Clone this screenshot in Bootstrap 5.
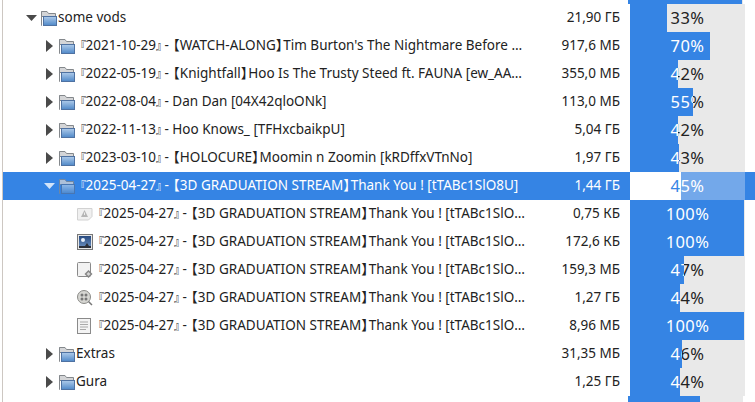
<!DOCTYPE html>
<html lang="en">
<head>
  <meta charset="UTF-8">
  <title>some vods</title>
  <link href="https://cdn.jsdelivr.net/npm/bootstrap@5.3.2/dist/css/bootstrap.min.css" rel="stylesheet">
  <style>
    html, body { height: 402px; overflow: hidden; background: #fff; }
    body {
      font-family: "Noto Sans", "Noto Sans CJK JP", sans-serif;
      font-size: 13.5px;
      color: #222;
    }
    .tree-frame { height: 402px; margin-left: 2px; border-left: 1px solid #cdc7c2; overflow: hidden; }
    .tree-row { height: 28px; }
    .tree-row.is-sel { background: #3584e4; color: #fff; }
    .strip-top { height: 4px; }
    .strip-bottom { height: 6px; }
    .name-cell { width: 524px; }
    .name-text { flex: 1; min-width: 0; overflow: hidden; white-space: nowrap; text-overflow: ellipsis; line-height: 26px; padding-bottom: 2px; }
    .indent-0 { padding-left: 20px; }
    .indent-1 { padding-left: 38px; }
    .indent-2 { padding-left: 74px; }
    .tree-arrow { width: 18px; height: 16px; }
    .tree-icon { width: 16px; height: 16px; margin-right: 1px; }
    .is-sel .tree-icon { opacity: .75; }
    /* the corner and lens brackets come out narrow in the original font */
    .br-corner { font-size: 11px; }
    .br-corner-start { margin-left: -1px; margin-right: -.5px; }
    .br-corner-end { margin-right: -6px; }
    .br-open { margin-left: -6px; }
    .br-close { margin-right: -6px; }
    .size-cell { width: 93px; line-height: 26px; padding-bottom: 2px; }
    .bar-cell { width: 115px; height: 100%; margin-left: 10px; position: relative; background: #e9e9e9; }
    .is-sel .bar-cell { background: #73a8ea; }
    .bar-text { width: 115px; line-height: 28px; text-align: center; font-size: 16.5px; letter-spacing: .4px; display: block; }
    .bar-fill { position: absolute; left: 0; top: 0; height: 100%; overflow: hidden; background: #3584e4; color: #fff; }
    .is-sel .bar-fill { background: #fff; color: #3584e4; }
  </style>
</head>
<body>
  <div class="tree-frame" id="tree"></div>
  <script>
    const folder = `<svg class="tree-icon flex-shrink-0" viewBox="0 0 16 16"><defs><linearGradient id="fg" x1="0" y1="0" x2="0" y2="1"><stop offset="0" stop-color="#afcbea"/><stop offset="1" stop-color="#4f88c8"/></linearGradient></defs><path d="M.5 15.500V1.500h5.500l1.500 2h7v3h-14" fill="#d4d5d7" stroke="#84888c"/><path d="M.5 15.500V1.500" stroke="#84888c"/><rect x="2.500" y="6.500" width="13" height="9" fill="url(#fg)" stroke="#4f72a2"/></svg>`;
    const warnIcon = `<svg class="tree-icon flex-shrink-0" viewBox="0 0 16 16"><path d="M.5 2.500h14.500v8l-3.500 3.500H.5z" fill="#f0f0f0" stroke="#d2d2d2"/><path d="M7.500 4l3.500 7H4z" fill="#b5b5b5"/><path d="M7.500 6.500v2.500" stroke="#eee"/></svg>`;
    const imgIcon = `<svg class="tree-icon flex-shrink-0" viewBox="0 0 16 16"><defs><linearGradient id="ig" x1="0" y1="0" x2="0" y2="1"><stop offset="0" stop-color="#27497f"/><stop offset="1" stop-color="#6f94c4"/></linearGradient></defs><rect x=".5" y=".5" width="15" height="15" fill="#e8e8e8" stroke="#777"/><rect x="2" y="2" width="12" height="12" fill="url(#ig)"/><circle cx="6" cy="6" r="2" fill="#e6eef8"/><path d="M2 14v-2h6l2-3 2 3h2v2z" fill="#2c2f38"/></svg>`;
    const otherIcon = `<svg class="tree-icon flex-shrink-0" viewBox="0 0 16 16"><rect x=".5" y=".5" width="13" height="14" rx="1" fill="#f2f2f2" stroke="#8a8a8a"/><path d="M11.500 8l4 4-4 4-4-4z" fill="#858585"/><path d="M11.500 10l2 2-2 2-2-2z" fill="#d5d5d5"/></svg>`;
    const discIcon = `<svg class="tree-icon flex-shrink-0" viewBox="0 0 16 16"><circle cx="7" cy="7" r="6.500" fill="#d6d6d2" stroke="#8a8a86"/><circle cx="5" cy="5" r="1.500" fill="#777"/><circle cx="9" cy="5" r="1.500" fill="#777"/><circle cx="5" cy="9" r="1.500" fill="#777"/><circle cx="9" cy="9" r="1.500" fill="#777"/><path d="M11.500 11.500l3.500 3.500" stroke="#777" stroke-width="1.500"/></svg>`;
    const textIcon = `<svg class="tree-icon flex-shrink-0" viewBox="0 0 16 16"><rect x=".5" y=".5" width="13" height="15" fill="#f4f4f4" stroke="#8a8a8a"/><path d="M3 4h8M3 6.500h8M3 9h8M3 11.500h6" stroke="#aaa"/></svg>`;
    const arrowRight = `<svg class="tree-arrow flex-shrink-0" viewBox="0 0 18 16"><path d="M5 2l7 6-7 6z" fill="#4a4a4a"/></svg>`;
    const arrowDown = c => `<svg class="tree-arrow flex-shrink-0" viewBox="0 0 18 16"><path d="M3 5h11l-5.500 6z" fill="${c}"/></svg>`;

    // brackets get their own spans so they can be narrowed
    const fmt = s => s
      .replace(/『/g, '<span class="br-corner br-corner-start">『</span>')
      .replace(/』/g, '<span class="br-corner br-corner-end">』</span>')
      .replace(/【/g, '<span class="br-open">【</span>')
      .replace(/】/g, '<span class="br-close">】</span>');

    const grad = "『2025-04-27』 - 【3D GRADUATION STREAM】Thank You ! [tTABc1SlO8U]";
    const rows = [
      [0, "some vods", "21,90 ГБ", 33, folder, "d"],
      [1, "『2021-10-29』 - 【WATCH-ALONG】Tim Burton's The Nightmare Before Christmas", "917,6 МБ", 70, folder, "r"],
      [1, "『2022-05-19』 - 【Knightfall】Hoo Is The Trusty Steed ft. FAUNA [ew_AAkT3xQpM]", "355,0 МБ", 42, folder, "r"],
      [1, "『2022-08-04』 - Dan Dan [04X42qloONk]", "113,0 МБ", 55, folder, "r"],
      [1, "『2022-11-13』 - Hoo Knows_ [TFHxcbaikpU]", "5,04 ГБ", 42, folder, "r"],
      [1, "『2023-03-10』 - 【HOLOCURE】Moomin n Zoomin [kRDffxVTnNo]", "1,97 ГБ", 43, folder, "r"],
      [1, grad, "1,44 ГБ", 45, folder, "s"],
      [2, grad + ".mkv", "0,75 КБ", 100, warnIcon, ""],
      [2, grad + ".jpg", "172,6 КБ", 100, imgIcon, ""],
      [2, grad + ".webm", "159,3 МБ", 47, otherIcon, ""],
      [2, grad + ".iso", "1,27 ГБ", 44, discIcon, ""],
      [2, grad + ".txt", "8,96 МБ", 100, textIcon, ""],
      [1, "Extras", "31,35 МБ", 46, folder, "r"],
      [1, "Gura", "1,25 ГБ", 44, folder, "r"]
    ];
    const barOnly = (cls, pct) => `<div class="${cls} d-flex justify-content-end pe-2 me-1"><div class="bar-cell"><div class="bar-fill" style="width:${Math.floor(pct * 1.15)}px"></div></div></div>`;
    const html = rows.map(([lvl, name, size, pct, icon, st]) => {
      const arrow = st === "r" ? arrowRight : st === "d" ? arrowDown("#4a4a4a") : st === "s" ? arrowDown("#d3e4f9") : "";
      return `<div class="tree-row d-flex align-items-center ${st === "s" ? "is-sel" : ""}">
        <div class="name-cell d-flex align-items-center flex-shrink-0 indent-${lvl}">${arrow}${icon}<div class="name-text">${fmt(name)}</div></div>
        <div class="size-cell flex-shrink-0 text-end">${size}</div>
        <div class="bar-cell flex-shrink-0"><span class="bar-text">${pct}%</span><div class="bar-fill" style="width:${Math.floor(pct * 1.15)}px"><span class="bar-text">${pct}%</span></div></div>
      </div>`;
    }).join("");
    document.getElementById("tree").innerHTML = barOnly("strip-top", 100) + html + barOnly("strip-bottom", 63);
  </script>
  <script src="https://cdn.jsdelivr.net/npm/bootstrap@5.3.2/dist/js/bootstrap.bundle.min.js"></script>
</body>
</html>
